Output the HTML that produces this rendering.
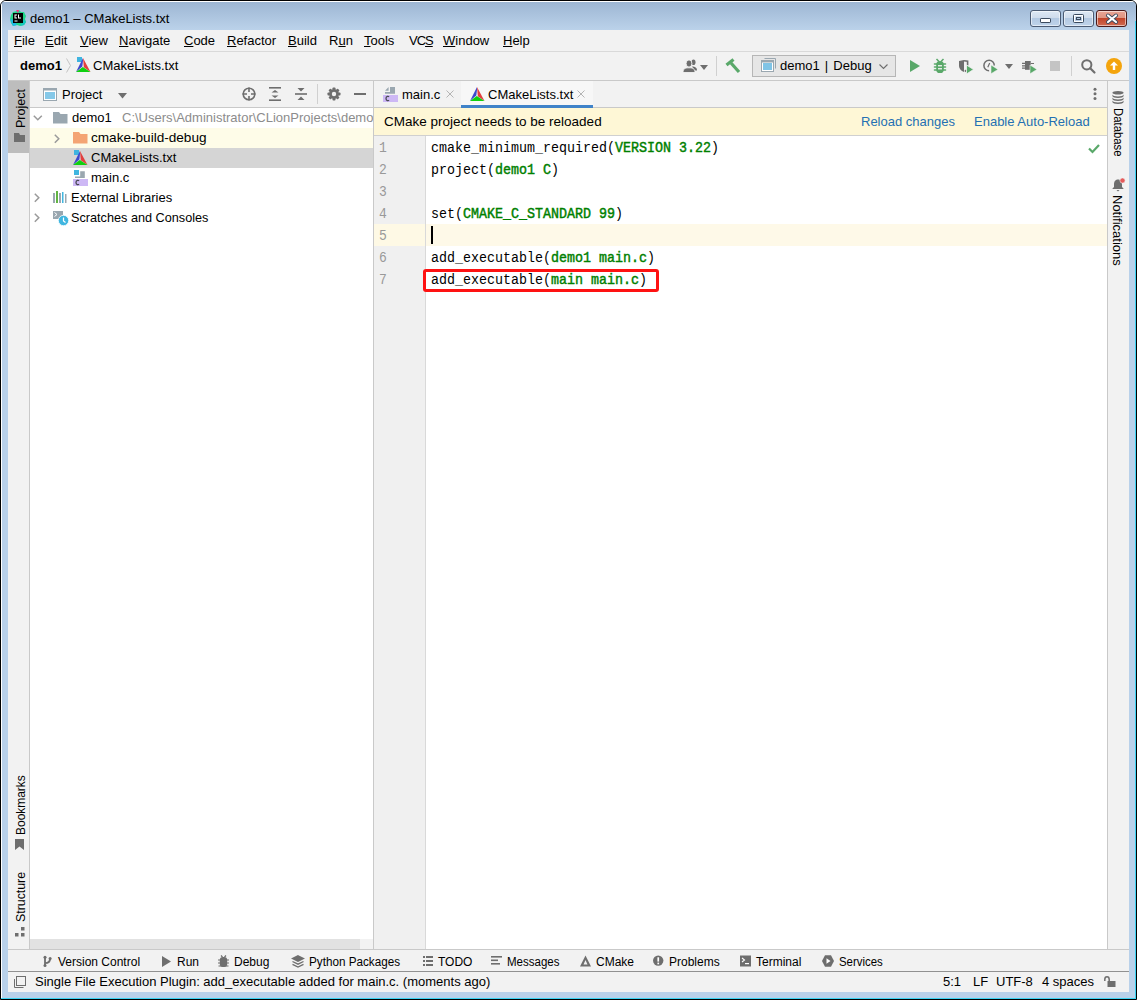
<!DOCTYPE html>
<html><head><meta charset="utf-8"><style>
html,body{margin:0;padding:0;width:1137px;height:1000px;overflow:hidden;background:#fff}
.a{position:absolute}
.t{line-height:1;white-space:nowrap}
u{text-underline-offset:1px}
body{font-family:'Liberation Sans',sans-serif}
svg{overflow:visible}
</style></head><body>
<div class="a" style="left:0;top:0;width:1137px;height:1000px;background:#fff"></div>
<div class="a" style="left:0;top:0;width:1135px;height:998px;border:1px solid #000;border-radius:6px 6px 0 0;background:#b9d1ea;overflow:hidden"><div class="a" style="left:0;top:0;width:1135px;height:1px;background:#fff"></div><div class="a" style="left:0;top:0;width:1px;height:998px;background:#fff"></div><div class="a" style="left:1px;top:1px;width:1134px;height:28px;background:linear-gradient(#9db6d3,#bbd2ea)"></div><div class="a" style="right:0;top:20px;width:1px;height:978px;background:#3bd3f3"></div><div class="a" style="left:0;bottom:0;width:1135px;height:1px;background:#3bd3f3"></div></div>
<div class="a" style="left:8px;top:30px;width:1121px;height:962px;background:#f2f2f2;"></div>
<svg class="a" style="left:10px;top:10px;" width="16" height="16" viewBox="0 0 16 16"><path d="M3 2 L7 1 L9 0 L11 2 L14 2 L16 6 L15 9 L16 12 L14 15 L10 16 L7 15 L3 16 L1 13 L0 9 L1 5 Z" fill="#21d789"/><path d="M0 9 L3 16 L7 15 L4 10 Z" fill="#1fb8e6"/><path d="M14 9 L16 12 L14 15 L10 16 Z" fill="#16c7c0"/><path d="M6 0 L9 0 L8 3 Z" fill="#ff2d8a"/><rect x="3" y="3" width="10" height="10" fill="#000"/><path d="M4.5 4.5h2.5v1h-1.5v2h1.5v1h-2.5z M8 4.5h1v3h2v1h-3z" fill="#fff"/><rect x="4.5" y="10.5" width="3" height="1" fill="#fff"/></svg>
<div class="a t" style="left:30px;top:12px;font-size:13px;color:#000;font-weight:normal;font-family:'Liberation Sans', sans-serif;">demo1 – CMakeLists.txt</div>
<div class="a" style="left:1030px;top:10px;width:29px;height:15px;border:1px solid #4b5b73;border-radius:3px;background:linear-gradient(#dde8f4 0%,#cfdcec 45%,#b3c9e2 50%,#bfd3ea 100%);box-shadow:inset 0 0 0 1px rgba(255,255,255,.55)"></div>
<div class="a" style="left:1063px;top:10px;width:29px;height:15px;border:1px solid #4b5b73;border-radius:3px;background:linear-gradient(#dde8f4 0%,#cfdcec 45%,#b3c9e2 50%,#bfd3ea 100%);box-shadow:inset 0 0 0 1px rgba(255,255,255,.55)"></div>
<div class="a" style="left:1096px;top:10px;width:29px;height:15px;border:1px solid #4a1a1a;border-radius:3px;background:linear-gradient(#eaa595 0%,#e09582 45%,#c2452b 50%,#cf6a52 100%);box-shadow:inset 0 0 0 1px rgba(255,255,255,.55)"></div>
<svg class="a" style="left:1030px;top:10px;" width="31" height="17" viewBox="0 0 31 17"><rect x="10.5" y="8.5" width="10" height="4" rx="0.6" fill="#fff" stroke="#3b4a5e" stroke-width="1"/></svg>
<svg class="a" style="left:1063px;top:10px;" width="31" height="17" viewBox="0 0 31 17"><rect x="10.5" y="4.5" width="10" height="8" rx="1" fill="none" stroke="#3b4a5e" stroke-width="1"/><rect x="11.5" y="5.5" width="8" height="6" fill="none" stroke="#fff" stroke-width="1"/><rect x="13.5" y="7.5" width="4" height="2" fill="none" stroke="#3b4a5e" stroke-width="1"/></svg>
<svg class="a" style="left:1096px;top:10px;" width="32" height="17" viewBox="0 0 32 17"><path d="M12 5.5 L20 12 M20 5.5 L12 12" stroke="#3b4a5e" stroke-width="4" stroke-linecap="round"/><path d="M12 5.5 L20 12 M20 5.5 L12 12" stroke="#fff" stroke-width="2.2" stroke-linecap="round"/></svg>
<div class="a" style="left:8px;top:30px;width:1121px;height:21px;background:#f2f2f2;"></div>
<div class="a" style="left:8px;top:51px;width:1121px;height:1px;background:#d9d9d9;"></div>
<div class="a t" style="left:14px;top:34px;font-size:13px;color:#000;font-weight:normal;font-family:'Liberation Sans', sans-serif;"><u>F</u>ile</div>
<div class="a t" style="left:45px;top:34px;font-size:13px;color:#000;font-weight:normal;font-family:'Liberation Sans', sans-serif;"><u>E</u>dit</div>
<div class="a t" style="left:80px;top:34px;font-size:13px;color:#000;font-weight:normal;font-family:'Liberation Sans', sans-serif;"><u>V</u>iew</div>
<div class="a t" style="left:119px;top:34px;font-size:13px;color:#000;font-weight:normal;font-family:'Liberation Sans', sans-serif;"><u>N</u>avigate</div>
<div class="a t" style="left:184px;top:34px;font-size:13px;color:#000;font-weight:normal;font-family:'Liberation Sans', sans-serif;"><u>C</u>ode</div>
<div class="a t" style="left:227px;top:34px;font-size:13px;color:#000;font-weight:normal;font-family:'Liberation Sans', sans-serif;"><u>R</u>efactor</div>
<div class="a t" style="left:288px;top:34px;font-size:13px;color:#000;font-weight:normal;font-family:'Liberation Sans', sans-serif;"><u>B</u>uild</div>
<div class="a t" style="left:329px;top:34px;font-size:13px;color:#000;font-weight:normal;font-family:'Liberation Sans', sans-serif;">R<u>u</u>n</div>
<div class="a t" style="left:364px;top:34px;font-size:13px;color:#000;font-weight:normal;font-family:'Liberation Sans', sans-serif;"><u>T</u>ools</div>
<div class="a t" style="left:409px;top:34px;font-size:13px;color:#000;font-weight:normal;font-family:'Liberation Sans', sans-serif;letter-spacing:-1px">VC<u>S</u></div>
<div class="a t" style="left:443px;top:34px;font-size:13px;color:#000;font-weight:normal;font-family:'Liberation Sans', sans-serif;"><u>W</u>indow</div>
<div class="a t" style="left:503px;top:34px;font-size:13px;color:#000;font-weight:normal;font-family:'Liberation Sans', sans-serif;"><u>H</u>elp</div>
<div class="a" style="left:8px;top:52px;width:1121px;height:28px;background:#f2f2f2;"></div>
<div class="a" style="left:8px;top:80px;width:1121px;height:1px;background:#c9c9c9;"></div>
<div class="a t" style="left:20px;top:59px;font-size:13px;color:#000;font-weight:bold;font-family:'Liberation Sans', sans-serif;">demo1</div>
<svg class="a" style="left:66px;top:58px;" width="6" height="15" viewBox="0 0 6 15"><path d="M0.5 0.5 L4.5 7.5 L0.5 14.5" fill="none" stroke="#c4c4c4" stroke-width="1"/></svg>
<svg class="a" style="left:76px;top:57px;" width="15" height="15" viewBox="0 0 15 15"><rect x="1" y="0" width="5" height="5" fill="#3fb4e0"/><path d="M7 1 L0 15 L6.3 9.6 L7 4 Z" fill="#3f48cc"/><path d="M7 1 L14.5 15 L7.8 10.2 Z" fill="#e23f3f"/><path d="M0 15 L14.5 15 L6.8 10 Z" fill="#10d010"/></svg>
<div class="a t" style="left:93px;top:59px;font-size:13px;color:#000;font-weight:normal;font-family:'Liberation Sans', sans-serif;">CMakeLists.txt</div>
<svg class="a" style="left:682px;top:58px;" width="16" height="16" viewBox="0 0 16 16"><ellipse cx="11.5" cy="4.2" rx="2" ry="2.8" fill="#6e6e6e"/><path d="M10 8.5 C13 8.5 15 9.5 15 12.5 H12.5 Z" fill="#6e6e6e"/><ellipse cx="7" cy="5.5" rx="2.9" ry="3.6" fill="#6e6e6e" stroke="#f2f2f2" stroke-width="0.9"/><path d="M1 14.5 C1 10.8 3 9.8 7 9.8 C11 9.8 13 10.8 13 14.5 Z" fill="#6e6e6e" stroke="#f2f2f2" stroke-width="0.9"/></svg>
<svg class="a" style="left:700px;top:65px;" width="8" height="5" viewBox="0 0 8 5"><path d="M0 0 L8 0 L4 5 Z" fill="#6e6e6e"/></svg>
<div class="a" style="left:716px;top:56px;width:1px;height:20px;background:#d0d0d0;"></div>
<svg class="a" style="left:722px;top:56px;" width="20" height="20" viewBox="0 0 20 20"><path d="M4.5 9 L11.5 3.5" stroke="#59a869" stroke-width="3.2"/><path d="M9 7 L17 16" stroke="#59a869" stroke-width="3.2"/></svg>
<div class="a" style="left:752px;top:55px;width:142px;height:20px;border:1px solid #b6b6b6;background:#e6e6e6"></div>
<svg class="a" style="left:761px;top:58px;" width="15" height="14" viewBox="0 0 15 14"><path d="M3.5 0.5 H14.5 V10.5" fill="none" stroke="#9aa7b0" stroke-width="1"/><rect x="0.5" y="2.5" width="12" height="11" fill="#fff" stroke="#9aa7b0" stroke-width="1"/><rect x="0.5" y="2.5" width="12" height="2" fill="#9aa7b0"/><rect x="2" y="5" width="9" height="7" fill="#80c4e6"/></svg>
<div class="a t" style="left:780px;top:59px;font-size:13px;color:#000;font-weight:normal;font-family:'Liberation Sans', sans-serif;word-spacing:1.5px">demo1 | Debug</div>
<svg class="a" style="left:879px;top:64px;" width="9" height="5" viewBox="0 0 9 5"><path d="M0.5 0.5 L4.5 4.5 L8.5 0.5" fill="none" stroke="#6e6e6e" stroke-width="1.1"/></svg>
<svg class="a" style="left:910px;top:60px;" width="10" height="12" viewBox="0 0 10 12"><path d="M0 0 L10 6 L0 12 Z" fill="#59a869"/></svg>
<svg class="a" style="left:933px;top:58px;" width="14" height="15" viewBox="0 0 14 15"><path d="M3.5 1 L6 3.5 M10.5 1 L8 3.5" stroke="#59a869" stroke-width="1.5"/><rect x="3.2" y="3" width="7.6" height="12" rx="3.6" fill="#59a869"/><path d="M1.5 6 H12.5 M1.5 9 H12.5 M1.5 12 H12.5" stroke="#59a869" stroke-width="1.6" stroke-linecap="round"/><rect x="5" y="7.1" width="4" height="1.3" fill="#f2f2f2"/><rect x="5" y="10.1" width="4" height="1.3" fill="#f2f2f2"/></svg>
<svg class="a" style="left:958px;top:59px;" width="16" height="15" viewBox="0 0 16 15"><path d="M1 2 L6 1 L6 13 C3 12 1 9.5 1 7 Z" fill="#6e6e6e"/><path d="M6 1.8 L9.6 2.3 V6.5 M6.8 12.5 C7.5 12 8 11.5 8.5 11" fill="none" stroke="#6e6e6e" stroke-width="1.6"/><path d="M8.5 6 L15.5 10.5 L8.5 15 Z" fill="#59a869" stroke="#f2f2f2" stroke-width="0.8"/></svg>
<svg class="a" style="left:983px;top:59px;" width="16" height="15" viewBox="0 0 16 15"><path d="M6.1 11.7 A5.2 5.2 0 1 1 11.3 6.5" fill="none" stroke="#6e6e6e" stroke-width="1.5"/><path d="M6.7 4 L4.8 8.2" fill="none" stroke="#6e6e6e" stroke-width="1.2"/><path d="M8 6 L15 10.4 L8 14.8 Z" fill="#59a869" stroke="#f2f2f2" stroke-width="0.6"/></svg>
<svg class="a" style="left:1005px;top:64px;" width="8" height="5" viewBox="0 0 8 5"><path d="M0 0 L8 0 L4 5 Z" fill="#6e6e6e"/></svg>
<svg class="a" style="left:1021px;top:59px;" width="17" height="15" viewBox="0 0 17 15"><rect x="4" y="2" width="5.7" height="8.8" fill="#6e6e6e"/><path d="M1 4.3 H4 M1 6.8 H4 M1 9.2 H4 M9.7 4.5 H13" stroke="#6e6e6e" stroke-width="1.2"/><path d="M9 6 L16 10.4 L9 14.8 Z" fill="#59a869" stroke="#f2f2f2" stroke-width="0.6"/></svg>
<div class="a" style="left:1050px;top:61px;width:10px;height:10px;background:#c4c4c4;"></div>
<div class="a" style="left:1071px;top:56px;width:1px;height:20px;background:#d0d0d0;"></div>
<svg class="a" style="left:1081px;top:59px;" width="15" height="15" viewBox="0 0 15 15"><circle cx="5.8" cy="5.8" r="4.6" fill="none" stroke="#6e6e6e" stroke-width="2"/><path d="M9.2 9.2 L13.5 13.5" stroke="#6e6e6e" stroke-width="2.2" stroke-linecap="round"/></svg>
<svg class="a" style="left:1106px;top:58px;" width="16" height="16" viewBox="0 0 16 16"><circle cx="8" cy="8" r="8" fill="#f4a40c"/><path d="M8 3.5 L12 7.5 L9.2 7.5 L9.2 12 L6.8 12 L6.8 7.5 L4 7.5 Z" fill="#fff"/></svg>
<div class="a" style="left:8px;top:81px;width:21px;height:868px;background:#f2f2f2;"></div>
<div class="a" style="left:29px;top:81px;width:1px;height:868px;background:#c9c9c9;"></div>
<div class="a" style="left:8px;top:81px;width:21px;height:72px;background:#bdbdbd;"></div>
<div class="a t" style="left:15px;top:128px;font-size:12.5px;font-family:'Liberation Sans',sans-serif;transform:rotate(-90deg);transform-origin:0 0;color:#000">Project</div>
<svg class="a" style="left:14px;top:133px;" width="11" height="9" viewBox="0 0 11 9"><path d="M0 0 H5 L6 2 H11 V9 H0 Z" fill="#6e6e6e"/></svg>
<div class="a t" style="left:14px;top:835px;font-size:13px;font-family:'Liberation Sans',sans-serif;transform:rotate(-90deg) scaleX(0.92);transform-origin:0 0;color:#000">Bookmarks</div>
<svg class="a" style="left:15px;top:839px;" width="10" height="12" viewBox="0 0 10 12"><path d="M0 0 H9 V11 L4.5 7.5 L0 11 Z" fill="#6e6e6e"/></svg>
<div class="a t" style="left:14px;top:922px;font-size:13px;font-family:'Liberation Sans',sans-serif;transform:rotate(-90deg) scaleX(0.95);transform-origin:0 0;color:#000">Structure</div>
<svg class="a" style="left:15px;top:927px;" width="10" height="10" viewBox="0 0 10 10"><rect x="6" y="0" width="3.5" height="3.5" fill="#6e6e6e"/><rect x="0" y="6" width="3.5" height="3.5" fill="#6e6e6e"/><rect x="6" y="6" width="3.5" height="3.5" fill="#6e6e6e"/></svg>
<div class="a" style="left:30px;top:81px;width:343px;height:26px;background:#f2f2f2;"></div>
<div class="a" style="left:30px;top:107px;width:343px;height:1px;background:#c9c9c9;"></div>
<div class="a" style="left:30px;top:108px;width:343px;height:831px;background:#ffffff;"></div>
<div class="a" style="left:30px;top:939px;width:330px;height:10px;background:#e2e2e2;"></div>
<div class="a" style="left:373px;top:81px;width:1px;height:868px;background:#c9c9c9;"></div>
<svg class="a" style="left:43px;top:88px;" width="14" height="13" viewBox="0 0 14 13"><rect x="0.5" y="0.5" width="13" height="12" fill="#fff" stroke="#9aa7b0"/><rect x="0.5" y="0.5" width="13" height="2" fill="#9aa7b0"/><rect x="2" y="4" width="10" height="7" fill="#85c8e8"/></svg>
<div class="a t" style="left:62px;top:88px;font-size:13px;color:#000;font-weight:normal;font-family:'Liberation Sans', sans-serif;">Project</div>
<svg class="a" style="left:118px;top:93px;" width="9" height="6" viewBox="0 0 9 6"><path d="M0 0 L9 0 L4.5 5.5 Z" fill="#6e6e6e"/></svg>
<svg class="a" style="left:242px;top:87px;" width="14" height="14" viewBox="0 0 14 14"><circle cx="7" cy="7" r="5.8" fill="none" stroke="#6e6e6e" stroke-width="1.6"/><path d="M7 0.5 V5 M7 9 V13.5 M0.5 7 H5 M9 7 H13.5" stroke="#6e6e6e" stroke-width="1.6"/></svg>
<svg class="a" style="left:269px;top:87px;" width="12" height="14" viewBox="0 0 12 14"><rect x="0" y="0" width="12" height="1.6" fill="#6e6e6e"/><rect x="0" y="12.4" width="12" height="1.6" fill="#6e6e6e"/><path d="M2.5 5.5 L6 3 L9.5 5.5 Z M2.5 8.5 L6 11 L9.5 8.5 Z" fill="#6e6e6e"/></svg>
<svg class="a" style="left:295px;top:87px;" width="12" height="14" viewBox="0 0 12 14"><rect x="0" y="6.2" width="12" height="1.6" fill="#6e6e6e"/><path d="M2.5 1 L9.5 1 L6 4.5 Z M2.5 13 L9.5 13 L6 9.5 Z" fill="#6e6e6e"/></svg>
<div class="a" style="left:317px;top:84px;width:1px;height:20px;background:#d0d0d0;"></div>
<svg class="a" style="left:327px;top:87px;" width="14" height="14" viewBox="0 0 14 14"><g fill="#6e6e6e"><circle cx="7" cy="7" r="4.8"/><rect x="5.5" y="0.5" width="3" height="13" rx="0.8"/><rect x="0.5" y="5.5" width="13" height="3" rx="0.8"/><rect x="5.5" y="0.5" width="3" height="13" rx="0.8" transform="rotate(45 7 7)"/><rect x="5.5" y="0.5" width="3" height="13" rx="0.8" transform="rotate(-45 7 7)"/></g><circle cx="7" cy="7" r="2.2" fill="#f2f2f2"/></svg>
<div class="a" style="left:354px;top:93px;width:12px;height:2px;background:#6e6e6e;"></div>
<div class="a" style="left:30px;top:128px;width:343px;height:20px;background:#fefce8;"></div>
<div class="a" style="left:30px;top:148px;width:343px;height:20px;background:#d5d5d5;"></div>
<svg class="a" style="left:33px;top:115px;" width="10" height="6" viewBox="0 0 10 6"><path d="M0.8 0.8 L4.8 4.8 L8.8 0.8" fill="none" stroke="#9a9a9a" stroke-width="1.5"/></svg>
<svg class="a" style="left:53px;top:112px;" width="15" height="12" viewBox="0 0 15 12"><path d="M0 0 H6 L7.5 2 H14.5 V11.5 H0 Z" fill="#9aa7b0"/></svg>
<div class="a t" style="left:72px;top:111px;font-size:13px;color:#000;font-weight:normal;font-family:'Liberation Sans', sans-serif;">demo1</div>
<div class="a t" style="left:122px;top:111px;font-size:13px;color:#8c8c8c;font-weight:normal;font-family:'Liberation Sans', sans-serif;width:251px;overflow:hidden">C:\Users\Administrator\CLionProjects\demo1</div>
<svg class="a" style="left:54px;top:134px;" width="6" height="10" viewBox="0 0 6 10"><path d="M0.8 0.8 L4.8 4.8 L0.8 8.8" fill="none" stroke="#9a9a9a" stroke-width="1.5"/></svg>
<svg class="a" style="left:73px;top:132px;" width="15" height="12" viewBox="0 0 15 12"><path d="M0 0 H6 L7.5 2 H14.5 V11.5 H0 Z" fill="#f4a473"/></svg>
<div class="a t" style="left:91px;top:131px;font-size:13px;color:#000;font-weight:normal;font-family:'Liberation Sans', sans-serif;transform:scaleX(1.045);transform-origin:0 0">cmake-build-debug</div>
<svg class="a" style="left:73px;top:150px;" width="15" height="15" viewBox="0 0 15 15"><rect x="1" y="0" width="5" height="5" fill="#3fb4e0"/><path d="M7 1 L0 15 L6.3 9.6 L7 4 Z" fill="#3f48cc"/><path d="M7 1 L14.5 15 L7.8 10.2 Z" fill="#e23f3f"/><path d="M0 15 L14.5 15 L6.8 10 Z" fill="#10d010"/></svg>
<div class="a t" style="left:91px;top:151px;font-size:13px;color:#000;font-weight:normal;font-family:'Liberation Sans', sans-serif;">CMakeLists.txt</div>
<svg class="a" style="left:73px;top:170px;" width="15" height="16" viewBox="0 0 15 16"><rect x="1" y="0" width="5" height="5" fill="#40b6e0"/><path d="M7.2 1.2 H11.8 V8 H2 V6.5 H7.2 Z" fill="#9aa7b0"/><rect x="0" y="9" width="15" height="7" fill="#cdb8f5"/><path d="M6 10.8 C5.5 10.2 3 10 3 12.5 C3 15 5.5 14.8 6 14.2" fill="none" stroke="#4a4a55" stroke-width="1.3"/></svg>
<div class="a t" style="left:91px;top:171px;font-size:13px;color:#000;font-weight:normal;font-family:'Liberation Sans', sans-serif;">main.c</div>
<svg class="a" style="left:34px;top:193px;" width="6" height="10" viewBox="0 0 6 10"><path d="M0.8 0.8 L4.8 4.8 L0.8 8.8" fill="none" stroke="#9a9a9a" stroke-width="1.5"/></svg>
<svg class="a" style="left:53px;top:191px;" width="14" height="12" viewBox="0 0 14 12"><rect x="0" y="2" width="2" height="10" fill="#9aa7b0"/><rect x="3" y="0" width="2" height="12" fill="#62b543"/><rect x="6" y="2" width="2" height="10" fill="#9aa7b0"/><rect x="9" y="1" width="1.5" height="11" fill="#40b6e0"/><rect x="12" y="3" width="1.5" height="9" fill="#9aa7b0"/></svg>
<div class="a t" style="left:71px;top:191px;font-size:13px;color:#000;font-weight:normal;font-family:'Liberation Sans', sans-serif;">External Libraries</div>
<svg class="a" style="left:34px;top:213px;" width="6" height="10" viewBox="0 0 6 10"><path d="M0.8 0.8 L4.8 4.8 L0.8 8.8" fill="none" stroke="#9a9a9a" stroke-width="1.5"/></svg>
<svg class="a" style="left:53px;top:211px;" width="16" height="15" viewBox="0 0 16 15"><rect x="0" y="0" width="10" height="8" fill="#9aa7b0"/><path d="M1.5 1.5 L4 3.5 L1.5 5.5" fill="none" stroke="#fff" stroke-width="1"/><circle cx="10.5" cy="9.5" r="5.2" fill="#40b6e0" stroke="#fff" stroke-width="0.8"/><path d="M10.5 6.5 V10 L12.5 11.5" fill="none" stroke="#fff" stroke-width="1.2"/></svg>
<div class="a t" style="left:71px;top:211px;font-size:13px;color:#000;font-weight:normal;font-family:'Liberation Sans', sans-serif;transform:scaleX(0.975);transform-origin:0 0">Scratches and Consoles</div>
<div class="a" style="left:374px;top:81px;width:733px;height:26px;background:#f2f2f2;"></div>
<div class="a" style="left:374px;top:107px;width:733px;height:1px;background:#c9c9c9;"></div>
<div class="a" style="left:461px;top:81px;width:132px;height:24px;background:#f7f7f7;"></div>
<div class="a" style="left:461px;top:105px;width:132px;height:3px;background:#4083c9;"></div>
<svg class="a" style="left:383px;top:86px;" width="15" height="16" viewBox="0 0 15 16"><path d="M2 4.75 L5.6 1 V4.75 Z M7 1 H12 V7.8 H2 V6 H7 Z" fill="#9aa7b0"/><rect x="0" y="9" width="15" height="7" fill="#cdb8f5"/><path d="M6 10.8 C5.5 10.2 3 10 3 12.5 C3 15 5.5 14.8 6 14.2" fill="none" stroke="#4a4a55" stroke-width="1.3"/></svg>
<div class="a t" style="left:402px;top:88px;font-size:13px;color:#000;font-weight:normal;font-family:'Liberation Sans', sans-serif;">main.c</div>
<svg class="a" style="left:446px;top:90px;" width="8" height="8" viewBox="0 0 8 8"><path d="M0.5 0.5 L7.5 7.5 M7.5 0.5 L0.5 7.5" stroke="#b4b4b4" stroke-width="1"/></svg>
<svg class="a" style="left:470px;top:86px;" width="15" height="15" viewBox="0 0 15 15"><path d="M7 1 L0 15 L6.3 9.6 L7 4 Z" fill="#3f48cc"/><path d="M7 1 L14.5 15 L7.8 10.2 Z" fill="#e23f3f"/><path d="M0 15 L14.5 15 L6.8 10 Z" fill="#10d010"/></svg>
<div class="a t" style="left:488px;top:88px;font-size:13px;color:#000;font-weight:normal;font-family:'Liberation Sans', sans-serif;">CMakeLists.txt</div>
<svg class="a" style="left:577px;top:90px;" width="8" height="8" viewBox="0 0 8 8"><path d="M0.5 0.5 L7.5 7.5 M7.5 0.5 L0.5 7.5" stroke="#b4b4b4" stroke-width="1"/></svg>
<svg class="a" style="left:1093px;top:87px;" width="4" height="14" viewBox="0 0 4 14"><circle cx="2" cy="2.2" r="1.5" fill="#6e6e6e"/><circle cx="2" cy="6.8" r="1.5" fill="#6e6e6e"/><circle cx="2" cy="11.6" r="1.5" fill="#6e6e6e"/></svg>
<div class="a" style="left:374px;top:108px;width:733px;height:27px;background:#fef7d6;"></div>
<div class="a" style="left:374px;top:135px;width:733px;height:1px;background:#d0d0d0;"></div>
<div class="a t" style="left:384px;top:115px;font-size:13.5px;color:#000;font-weight:normal;font-family:'Liberation Sans', sans-serif;">CMake project needs to be reloaded</div>
<div class="a t" style="left:861px;top:115px;font-size:13px;color:#2470b3;font-weight:normal;font-family:'Liberation Sans', sans-serif;">Reload changes</div>
<div class="a t" style="left:974px;top:115px;font-size:13px;color:#2470b3;font-weight:normal;font-family:'Liberation Sans', sans-serif;">Enable Auto-Reload</div>
<div class="a" style="left:374px;top:136px;width:51px;height:813px;background:#f0f0f0;"></div>
<div class="a" style="left:425px;top:136px;width:1px;height:813px;background:#d9d9d9;"></div>
<div class="a" style="left:426px;top:136px;width:681px;height:813px;background:#ffffff;"></div>
<div class="a" style="left:374px;top:224px;width:51px;height:22px;background:#fef9e5;"></div>
<div class="a" style="left:426px;top:224px;width:681px;height:22px;background:#fef9e8;"></div>
<div class="a" style="left:1107px;top:81px;width:1px;height:868px;background:#c9c9c9;"></div>
<div class="a t" style="left:379px;top:142px;font-size:13px;color:#999999;font-weight:normal;font-family:'Liberation Mono', monospace;transform:scaleY(1.12);transform-origin:0 80%">1</div>
<div class="a t" style="left:379px;top:164px;font-size:13px;color:#999999;font-weight:normal;font-family:'Liberation Mono', monospace;transform:scaleY(1.12);transform-origin:0 80%">2</div>
<div class="a t" style="left:379px;top:186px;font-size:13px;color:#999999;font-weight:normal;font-family:'Liberation Mono', monospace;transform:scaleY(1.12);transform-origin:0 80%">3</div>
<div class="a t" style="left:379px;top:208px;font-size:13px;color:#999999;font-weight:normal;font-family:'Liberation Mono', monospace;transform:scaleY(1.12);transform-origin:0 80%">4</div>
<div class="a t" style="left:379px;top:230px;font-size:13px;color:#999999;font-weight:normal;font-family:'Liberation Mono', monospace;transform:scaleY(1.12);transform-origin:0 80%">5</div>
<div class="a t" style="left:379px;top:252px;font-size:13px;color:#999999;font-weight:normal;font-family:'Liberation Mono', monospace;transform:scaleY(1.12);transform-origin:0 80%">6</div>
<div class="a t" style="left:379px;top:274px;font-size:13px;color:#999999;font-weight:normal;font-family:'Liberation Mono', monospace;transform:scaleY(1.12);transform-origin:0 80%">7</div>
<div class="a t" style="left:431px;top:142px;font-size:13.33px;color:#000;font-weight:normal;font-family:'Liberation Mono', monospace;transform:scaleY(1.1);transform-origin:0 80%">cmake_minimum_required(<span style="color:#008000;font-weight:normal;-webkit-text-stroke:0.4px #008000">VERSION 3.22</span>)</div>
<div class="a t" style="left:431px;top:164px;font-size:13.33px;color:#000;font-weight:normal;font-family:'Liberation Mono', monospace;transform:scaleY(1.1);transform-origin:0 80%">project(<span style="color:#008000;font-weight:normal;-webkit-text-stroke:0.4px #008000">demo1 C</span>)</div>
<div class="a t" style="left:431px;top:208px;font-size:13.33px;color:#000;font-weight:normal;font-family:'Liberation Mono', monospace;transform:scaleY(1.1);transform-origin:0 80%">set(<span style="color:#008000;font-weight:normal;-webkit-text-stroke:0.4px #008000">CMAKE_C_STANDARD 99</span>)</div>
<div class="a t" style="left:431px;top:252px;font-size:13.33px;color:#000;font-weight:normal;font-family:'Liberation Mono', monospace;transform:scaleY(1.1);transform-origin:0 80%">add_executable(<span style="color:#008000;font-weight:normal;-webkit-text-stroke:0.4px #008000">demo1 main.c</span>)</div>
<div class="a t" style="left:431px;top:274px;font-size:13.33px;color:#000;font-weight:normal;font-family:'Liberation Mono', monospace;transform:scaleY(1.1);transform-origin:0 80%">add_executable(<span style="color:#008000;font-weight:normal;-webkit-text-stroke:0.4px #008000">main main.c</span>)</div>
<div class="a" style="left:431px;top:226px;width:2px;height:18px;background:#000;"></div>
<div class="a" style="left:423px;top:269px;width:230px;height:17px;border:3px solid #fe1212;border-radius:3px"></div>
<svg class="a" style="left:1088px;top:144px;" width="12" height="9" viewBox="0 0 12 9"><path d="M1 4.5 L4.5 8 L11 1" fill="none" stroke="#59a869" stroke-width="2.2"/></svg>
<div class="a" style="left:1108px;top:81px;width:21px;height:868px;background:#f2f2f2;"></div>
<svg class="a" style="left:1112px;top:91px;" width="12" height="13" viewBox="0 0 12 13"><g fill="#6e6e6e"><ellipse cx="6" cy="1.8" rx="5.6" ry="1.8"/><path d="M0.4 3.6 C0.4 4.8 3 5.6 6 5.6 C9 5.6 11.6 4.8 11.6 3.6 V5 C11.6 6.2 9 7 6 7 C3 7 0.4 6.2 0.4 5 Z"/><path d="M0.4 6.6 C0.4 7.8 3 8.6 6 8.6 C9 8.6 11.6 7.8 11.6 6.6 V8 C11.6 9.2 9 10 6 10 C3 10 0.4 9.2 0.4 8 Z"/><path d="M0.4 9.6 C0.4 10.8 3 11.6 6 11.6 C9 11.6 11.6 10.8 11.6 9.6 V11 C11.6 12.2 9 13 6 13 C3 13 0.4 12.2 0.4 11 Z"/></g></svg>
<div class="a t" style="left:1125px;top:108px;font-size:13.5px;font-family:'Liberation Sans',sans-serif;transform:rotate(90deg) scaleX(0.84);transform-origin:0 0;color:#000">Database</div>
<svg class="a" style="left:1112px;top:178px;" width="14" height="14" viewBox="0 0 14 14"><path d="M6 1.5 C3 1.5 2 4 2 6.5 V9 L0.5 10.5 V11 H11.5 V10.5 L10 9 V6.5 C10 4 9 1.5 6 1.5Z" fill="#6e6e6e"/><path d="M4.5 12 H7.5 L6 13.5 Z" fill="#6e6e6e"/><circle cx="10.5" cy="2.5" r="2.6" fill="#e55b5b" stroke="#f2f2f2" stroke-width="0.6"/></svg>
<div class="a t" style="left:1124px;top:195px;font-size:13px;font-family:'Liberation Sans',sans-serif;transform:rotate(90deg);transform-origin:0 0;color:#000">Notifications</div>
<div class="a" style="left:8px;top:949px;width:1121px;height:1px;background:#c9c9c9;"></div>
<div class="a" style="left:8px;top:950px;width:1121px;height:21px;background:#f2f2f2;"></div>
<div class="a" style="left:8px;top:971px;width:1121px;height:1px;background:#919191;"></div>
<svg class="a" style="left:42px;top:955px;" width="14" height="13" viewBox="0 0 14 13"><circle cx="3" cy="2.2" r="1.5" fill="#6e6e6e"/><circle cx="3" cy="10.5" r="1.5" fill="#6e6e6e"/><path d="M3 2.2 V10.5 M8.1 3.6 C8.1 7 6.5 8.2 3 8.2" fill="none" stroke="#6e6e6e" stroke-width="1.8"/><circle cx="8.1" cy="3.6" r="1.5" fill="#6e6e6e"/></svg>
<div class="a t" style="left:58px;top:956px;font-size:12px;color:#000;font-weight:normal;font-family:'Liberation Sans', sans-serif;">Version Control</div>
<svg class="a" style="left:162px;top:955px;" width="14" height="13" viewBox="0 0 14 13"><path d="M0 1 L9 6.5 L0 12 Z" fill="#6e6e6e"/></svg>
<div class="a t" style="left:177px;top:956px;font-size:12px;color:#000;font-weight:normal;font-family:'Liberation Sans', sans-serif;">Run</div>
<svg class="a" style="left:218px;top:955px;" width="14" height="13" viewBox="0 0 14 13"><path d="M3 0.5 L4.5 2 M8 0.5 L6.5 2" stroke="#6e6e6e" stroke-width="1.2"/><rect x="1.8" y="2" width="7.4" height="10" rx="3" fill="#6e6e6e"/><path d="M0 5 H11 M0 8 H11 M0.5 11 H10.5" stroke="#6e6e6e" stroke-width="1.2"/></svg>
<div class="a t" style="left:234px;top:956px;font-size:12px;color:#000;font-weight:normal;font-family:'Liberation Sans', sans-serif;">Debug</div>
<svg class="a" style="left:292px;top:955px;" width="14" height="13" viewBox="0 0 14 13"><g fill="none" stroke="#6e6e6e" stroke-width="1.3"><path d="M6 0.8 L11.5 3.5 L6 6.2 L0.5 3.5 Z" fill="#6e6e6e"/><path d="M0.5 6.5 L6 9.2 L11.5 6.5"/><path d="M0.5 9.3 L6 12 L11.5 9.3"/></g></svg>
<div class="a t" style="left:309px;top:956px;font-size:12px;color:#000;font-weight:normal;font-family:'Liberation Sans', sans-serif;transform:scaleX(0.975);transform-origin:0 0">Python Packages</div>
<svg class="a" style="left:423px;top:955px;" width="14" height="13" viewBox="0 0 14 13"><g fill="#6e6e6e"><rect x="0" y="1" width="2" height="2"/><rect x="0" y="5" width="2" height="2"/><rect x="0" y="9" width="2" height="2"/><rect x="3" y="1" width="7" height="2"/><rect x="3" y="5" width="7" height="2"/><rect x="3" y="9" width="7" height="2"/></g></svg>
<div class="a t" style="left:438px;top:956px;font-size:12px;color:#000;font-weight:normal;font-family:'Liberation Sans', sans-serif;">TODO</div>
<svg class="a" style="left:491px;top:955px;" width="14" height="13" viewBox="0 0 14 13"><g fill="#6e6e6e"><rect x="0" y="1" width="11" height="1.6"/><rect x="0" y="4.5" width="7" height="1.6"/><rect x="0" y="8" width="9" height="1.6"/></g></svg>
<div class="a t" style="left:507px;top:956px;font-size:12px;color:#000;font-weight:normal;font-family:'Liberation Sans', sans-serif;transform:scaleX(0.96);transform-origin:0 0">Messages</div>
<svg class="a" style="left:580px;top:955px;" width="14" height="13" viewBox="0 0 14 13"><path d="M5.5 0.5 L11 11.5 H0 Z" fill="#6e6e6e"/><path d="M5.5 5 L7.5 9.5 H3.5 Z" fill="#f2f2f2"/></svg>
<div class="a t" style="left:596px;top:956px;font-size:12px;color:#000;font-weight:normal;font-family:'Liberation Sans', sans-serif;">CMake</div>
<svg class="a" style="left:653px;top:955px;" width="14" height="13" viewBox="0 0 14 13"><circle cx="5.2" cy="5.6" r="5.2" fill="#6e6e6e"/><rect x="4.4" y="2.3" width="1.7" height="4.3" fill="#fff"/><rect x="4.4" y="7.6" width="1.7" height="1.7" fill="#fff"/></svg>
<div class="a t" style="left:669px;top:956px;font-size:12px;color:#000;font-weight:normal;font-family:'Liberation Sans', sans-serif;">Problems</div>
<svg class="a" style="left:740px;top:955px;" width="14" height="13" viewBox="0 0 14 13"><rect x="0" y="0.5" width="11" height="11" fill="#6e6e6e"/><path d="M2 3 L4.5 5 L2 7" fill="none" stroke="#fff" stroke-width="1.1"/><rect x="5" y="8" width="4" height="1.2" fill="#fff"/></svg>
<div class="a t" style="left:756px;top:956px;font-size:12px;color:#000;font-weight:normal;font-family:'Liberation Sans', sans-serif;">Terminal</div>
<svg class="a" style="left:822px;top:955px;" width="14" height="13" viewBox="0 0 14 13"><path d="M3 0.3 H9 L12 6 L9 11.7 H3 L0 6 Z" fill="#6e6e6e"/><path d="M4.5 3.2 L8.5 6 L4.5 8.8 Z" fill="#fff"/></svg>
<div class="a t" style="left:839px;top:956px;font-size:12px;color:#000;font-weight:normal;font-family:'Liberation Sans', sans-serif;transform:scaleX(0.95);transform-origin:0 0">Services</div>
<div class="a" style="left:8px;top:972px;width:1121px;height:20px;background:#f2f2f2;"></div>
<svg class="a" style="left:14px;top:976px;" width="12" height="12" viewBox="0 0 12 12"><path d="M0.5 3 V11.5 H9.5" fill="none" stroke="#6e6e6e" stroke-width="1"/><rect x="2.5" y="0.5" width="9" height="9" fill="none" stroke="#6e6e6e" stroke-width="1"/></svg>
<div class="a t" style="left:35px;top:975px;font-size:13px;color:#000;font-weight:normal;font-family:'Liberation Sans', sans-serif;">Single File Execution Plugin: add_executable added for main.c. (moments ago)</div>
<div class="a t" style="left:943px;top:975px;font-size:13px;color:#000;font-weight:normal;font-family:'Liberation Sans', sans-serif;">5:1</div>
<div class="a t" style="left:973px;top:975px;font-size:13px;color:#000;font-weight:normal;font-family:'Liberation Sans', sans-serif;">LF</div>
<div class="a t" style="left:996px;top:975px;font-size:13px;color:#000;font-weight:normal;font-family:'Liberation Sans', sans-serif;">UTF-8</div>
<div class="a t" style="left:1042px;top:975px;font-size:13px;color:#000;font-weight:normal;font-family:'Liberation Sans', sans-serif;">4 spaces</div>
<svg class="a" style="left:1104px;top:976px;" width="12" height="11" viewBox="0 0 12 11"><path d="M0.8 5 V3.5 C0.8 1.5 2 0.8 3 0.8 C4 0.8 5.2 1.5 5.2 3.5 V5.5" fill="none" stroke="#6e6e6e" stroke-width="1.5"/><rect x="3.5" y="5" width="8" height="6" fill="#6e6e6e"/></svg>
</body></html>
